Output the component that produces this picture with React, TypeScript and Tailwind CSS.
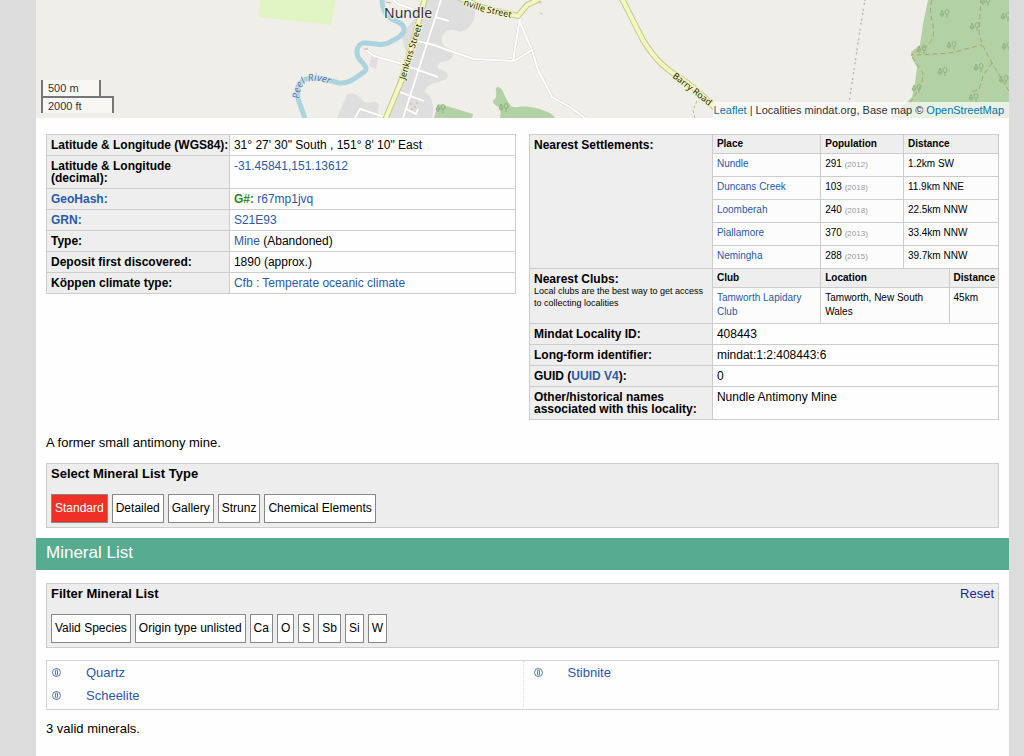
import React from 'react';

const settlements = [
  { place: 'Nundle', population: '291', year: '(2012)', distance: '1.2km SW' },
  { place: 'Duncans Creek', population: '103', year: '(2018)', distance: '11.9km NNE' },
  { place: 'Loomberah', population: '240', year: '(2018)', distance: '22.5km NNW' },
  { place: 'Piallamore', population: '370', year: '(2013)', distance: '33.4km NNW' },
  { place: 'Nemingha', population: '288', year: '(2015)', distance: '39.7km NNW' },
];

const listTypes = ['Standard', 'Detailed', 'Gallery', 'Strunz', 'Chemical Elements'];
const filters = ['Valid Species', 'Origin type unlisted', 'Ca', 'O', 'S', 'Sb', 'Si', 'W'];

const trees = [
  [945, 14], [975, 27], [952, 46], [943, 72], [979, 68], [922, 50], [917, 89],
  [986, 2], [1006, 17], [1007, 47], [1004, 80], [974, 98], [441, 109], [504, 108],
];

const link = 'text-[#2a5aa8] hover:underline';
const labelCell = 'border border-[#ccc] bg-[#eee] px-1 py-1 text-left align-top font-bold';
const valueCell = 'border border-[#ccc] px-1 py-1 align-top';

// cells of the tables nested in the right hand panel
const subHead = 'bg-[#eee] px-1 py-[2px] text-left font-bold border-b border-[#ccc] not-last:border-r';
const subCell = 'px-1 pt-[3px] align-top border-[#ccc] not-last:border-r';

const LocalityMap: React.FC = () => (
  <div className="relative h-[118px] overflow-hidden bg-[#f0eee9]">
    <svg className="block h-full w-full" viewBox="36 0 973 118" preserveAspectRatio="xMidYMid slice" fill="none" role="img" aria-label="Map of Nundle">
      <defs>
        <g id="tree" stroke="#8eb382" strokeWidth="1">
          <path d="M-3 3 V-1 M-5 1 L-3 -4 L-1 1 Z" />
          <path d="M2 4 V0" />
          <ellipse cx="2" cy="-2" rx="2" ry="2.5" />
        </g>
        <path id="peel" d="M300 99 C299 88 303 82 312 81 C320 80 328 83 340 88" />
        <path id="granville" d="M463 5 L484 12 L522 20" />
      </defs>

      {/* Land use */}
      <path d="M261 0 L258 17 L331 25 L336 0 Z" fill="#e0f4c4" />
      <path d="M423 0 L473 0 C476 8 476 17 472 23 C466 32 461 33 455 30 C446 28 440 36 442 42 C444 49 452 48 453 54 C453 63 439 60 437 66 C438 71 447 69 448 76 C446 84 428 80 425 91 C434 98 434 111 432 118 L385 118 L403 65 C410 57 405 49 402 39 C403 28 416 22 418 8 Z" fill="#dedede" />
      <path d="M337 118 L347 95 C352 91 360 96 363 101 C369 106 374 98 379 104 L377 118 Z" fill="#dedede" />
      <path d="M372 56 L378 58 L376 69 L369 66 Z" fill="#e6d9e6" />
      <path d="M434 118 L438 104 L450 107 L473 114 L472 118 Z" fill="#b2d1a4" />
      <path d="M500 118 L501 108 C493 105 491 101 495 99 C498 95 494 90 497 87 C503 86 503 95 509 103 C512 111 520 105 530 107 C542 109 553 113 555 118 Z" fill="#b2d1a4" />
      <path d="M928 0 L923 24 L920 45 L911 52 L913 60 L917 67 L915 83 L912 97 L900 110 L890 118 L1009 118 L1009 0 Z" fill="#b2d1a4" />

      {/* River */}
      <path d="M382 0 C382 6 384 13 390 18 C397 22 405 23 404 31 C402 37 394 40 388 43 C379 47 373 42 363 43 C357 45 356 51 358 57 C361 63 370 67 364 72 C354 79 348 84 339 83 L328 80 C315 77 303 76 298 86 C295 98 302 107 305 119" stroke="#aad3df" strokeWidth="5" />

      {/* Minor roads */}
      <g stroke="#d8d6d3" strokeWidth="3">
        <path d="M441 0 L403 118 M435 17 L449 21 M417 41 L434 45 L453 52 L474 59 L514 61 L532 50 M520 18 L513 61 M518 18 L532 50 L538 70 L552 97 L570 107 L585 118 M407 66 L438 77 M366 50 L374 56 L403 64 M397 91 L424 101 M406 109 L416 114 L418 109 M355 118 L360 109 L388 118 M393 0 L398 4 L418 11" />
      </g>
      <g stroke="#ffffff" strokeWidth="2">
        <path d="M441 0 L403 118 M435 17 L449 21 M417 41 L434 45 L453 52 L474 59 L514 61 L532 50 M520 18 L513 61 M518 18 L532 50 L538 70 L552 97 L570 107 L585 118 M407 66 L438 77 M366 50 L374 56 L403 64 M397 91 L424 101 M406 109 L416 114 L418 109 M355 118 L360 109 L388 118 M393 0 L398 4 L418 11" />
      </g>

      {/* Main roads */}
      <g stroke="#c3c79a" strokeWidth="6">
        <path d="M425 -2 L418 24 L403 77 L385 120" />
        <path d="M455 -4 L484 8 L518 16 L527 5 L540 -1" />
        <path d="M621 -3 C629 12 636 27 643 40 C656 62 669 71 682 79 C699 91 713 105 726 120" />
      </g>
      <g stroke="#f5f8ba" strokeWidth="4">
        <path d="M425 -2 L418 24 L403 77 L385 120" />
        <path d="M455 -4 L484 8 L518 16 L527 5 L540 -1" />
        <path d="M621 -3 C629 12 636 27 643 40 C656 62 669 71 682 79 C699 91 713 105 726 120" />
      </g>

      {/* Tracks and boundary */}
      <path d="M932 0 C927 13 936 25 933 36 C930 47 922 48 911 55 C945 54 955 53 965 49 L982 45 M981 -2 L979 33 L982 44 L992 63 L1009 91 M912 57 L923 73 L922 83 L913 99 L903 109 M992 63 L983 76 L979 90 L970 92" stroke="#b7a25c" strokeWidth="1" strokeDasharray="5 3" />
      <path d="M697 101 L693 110 L695 118 M540 13 L544 15 M535 -2 L542 4" stroke="#ccb583" strokeWidth="1" strokeDasharray="3 2" />
      <path d="M865 -1 L860 30 L854 70 L849 103" stroke="#c8a8c8" strokeWidth="1.4" strokeDasharray="2 2 2 4" />
      <path d="M386 2 L391 3 M364 49 L368 49 M410 104 H412 M414 107 H416 M411 109 H413 M416 103 H418" stroke="#d7a68c" strokeWidth="1" />
      {trees.map(([x, y]) => (
        <use key={`${x}-${y}`} href="#tree" x={x} y={y} />
      ))}

      {/* Place names */}
      <g fontFamily="'Noto Sans', sans-serif" paintOrder="stroke" strokeLinejoin="round">
        <text x="384" y="18" fontSize="14" fill="#333" stroke="#f2f0ec" strokeWidth="2">Nundle</text>
        <text fontSize="9" fill="#222" stroke="#f5f8ba" strokeWidth="2" transform="translate(405 80) rotate(-73)">Jenkins Street</text>
        <text fontSize="9" fill="#222" stroke="#f5f8ba" strokeWidth="2" transform="translate(672 77) rotate(38)">Barry Road</text>
        <text fontSize="9" fill="#222" stroke="#f5f8ba" strokeWidth="2">
          <textPath href="#granville">nville Street</textPath>
        </text>
        <text fontSize="10" fill="#4a74b8" stroke="#f0eee9" strokeWidth="1" fontStyle="italic">
          <textPath href="#peel">Peel River</textPath>
        </text>
      </g>
    </svg>

    {/* Scale */}
    <div className="absolute bottom-[5px] left-[5px] text-[11px] leading-4 text-[#333]">
      <div className="h-4 w-[60px] border-x-2 border-[#777] bg-white/50 px-[5px]">500 m</div>
      <div className="h-[17px] w-[73px] border-2 border-b-0 border-[#777] bg-white/50 px-[5px]">2000 ft</div>
    </div>

    <div className="absolute right-0 bottom-0 bg-white/70 pr-[5px] pl-px text-[11px] leading-4 text-[#333]">
      <a href="#leaflet" className="text-[#0078a8]">Leaflet</a> | Localities mindat.org, Base map © <a href="#osm" className="text-[#0078a8]">OpenStreetMap</a>
    </div>
  </div>
);

const InfoIcon: React.FC = () => (
  <svg className="h-[9px] w-[9px]" viewBox="0 0 9 9" fill="none" stroke="#2a5aa8" strokeWidth="0.8" aria-hidden="true">
    <circle cx="4.5" cy="4.5" r="4" />
    <rect x="3.5" y="2" width="2" height="5" rx="0.8" />
  </svg>
);

const Mineral: React.FC<{ name: string }> = ({ name }) => (
  <li className="flex h-[23px] items-center">
    <a href={`#info-${name}`} aria-label={`About ${name}`} className="w-[34px] shrink-0"><InfoIcon /></a>
    <a href={`#${name}`} className={link}>{name}</a>
  </li>
);

const OptionButton: React.FC<{ label: string; active?: boolean }> = ({ label, active }) => (
  <button
    type="button"
    className={`h-[29px] border border-[#888] px-[3px] pb-[2px] text-[12px] ${active ? 'bg-[#ee3124] text-white' : 'bg-white text-black'}`}
  >
    {label}
  </button>
);

const GeneralTable: React.FC = () => (
  <table className="w-full table-fixed border-collapse text-[12px] leading-3">
    <colgroup>
      <col className="w-[39%]" />
      <col />
    </colgroup>
    <tbody>
      <tr>
        <th scope="row" className={`${labelCell} whitespace-nowrap`}>Latitude &amp; Longitude (WGS84):</th>
        <td className={valueCell}>31° 27' 30" South , 151° 8' 10" East</td>
      </tr>
      <tr>
        <th scope="row" className={labelCell}>Latitude &amp; Longitude (decimal):</th>
        <td className={valueCell}><a href="#coords" className={link}>-31.45841,151.13612</a></td>
      </tr>
      <tr>
        <th scope="row" className={labelCell}><a href="#geohash" className={link}>GeoHash:</a></th>
        <td className={valueCell}><b className="text-[#2c8a1c]">G#:</b> <a href="#hash" className={link}>r67mp1jvq</a></td>
      </tr>
      <tr>
        <th scope="row" className={labelCell}><a href="#grn" className={link}>GRN:</a></th>
        <td className={valueCell}><a href="#grid" className={link}>S21E93</a></td>
      </tr>
      <tr>
        <th scope="row" className={labelCell}>Type:</th>
        <td className={valueCell}><a href="#mine" className={link}>Mine</a> (Abandoned)</td>
      </tr>
      <tr>
        <th scope="row" className={labelCell}>Deposit first discovered:</th>
        <td className={valueCell}>1890 (approx.)</td>
      </tr>
      <tr>
        <th scope="row" className={labelCell}>Köppen climate type:</th>
        <td className={valueCell}><a href="#climate" className={link}>Cfb : Temperate oceanic climate</a></td>
      </tr>
    </tbody>
  </table>
);

const LocalityTable: React.FC = () => (
  <table className="w-full table-fixed border-collapse text-[12px] leading-3">
    <colgroup>
      <col className="w-[39%]" />
      <col />
    </colgroup>
    <tbody>
      <tr>
        <th scope="row" className={labelCell}>Nearest Settlements:</th>
        <td className="border border-[#ccc] p-0 align-top">
          <table className="w-full table-fixed border-separate border-spacing-0 bg-[#fcfcfc] text-[10px] leading-[14px]">
            <colgroup>
              <col className="w-[38%]" />
              <col className="w-[29%]" />
              <col />
            </colgroup>
            <thead>
              <tr>
                <th className={subHead}>Place</th>
                <th className={subHead}>Population</th>
                <th className={subHead}>Distance</th>
              </tr>
            </thead>
            <tbody className="[&>tr:not(:last-child)>td]:border-b">
              {settlements.map(s => (
                <tr key={s.place}>
                  <td className={`${subCell} pb-[5px]`}><a href={`#${s.place}`} className={link}>{s.place}</a></td>
                  <td className={`${subCell} pb-[5px]`}>{s.population} <span className="text-[8px] leading-none text-[#999]">{s.year}</span></td>
                  <td className={`${subCell} pb-[5px]`}>{s.distance}</td>
                </tr>
              ))}
            </tbody>
          </table>
        </td>
      </tr>
      <tr>
        <th scope="row" className={labelCell}>
          Nearest Clubs:
          <p className="text-[9px] font-normal whitespace-nowrap">Local clubs are the best way to get access<br />to collecting localities</p>
        </th>
        <td className="border border-[#ccc] p-0 align-top">
          <table className="w-full table-fixed border-separate border-spacing-0 bg-[#fcfcfc] text-[10px] leading-[14px]">
            <colgroup>
              <col className="w-[38%]" />
              <col className="w-[45%]" />
              <col />
            </colgroup>
            <thead>
              <tr>
                <th className={subHead}>Club</th>
                <th className={subHead}>Location</th>
                <th className={subHead}>Distance</th>
              </tr>
            </thead>
            <tbody>
              <tr>
                <td className={`${subCell} pb-1`}><a href="#club" className={link}>Tamworth Lapidary Club</a></td>
                <td className={`${subCell} pb-1`}>Tamworth, New South Wales</td>
                <td className={`${subCell} pb-1`}>45km</td>
              </tr>
            </tbody>
          </table>
        </td>
      </tr>
      <tr>
        <th scope="row" className={labelCell}>Mindat Locality ID:</th>
        <td className={valueCell}>408443</td>
      </tr>
      <tr>
        <th scope="row" className={labelCell}>Long-form identifier:</th>
        <td className={valueCell}>mindat:1:2:408443:6</td>
      </tr>
      <tr>
        <th scope="row" className={labelCell}>GUID (<a href="#uuid" className={link}>UUID V4</a>):</th>
        <td className={valueCell}>0</td>
      </tr>
      <tr>
        <th scope="row" className={labelCell}>Other/historical names associated with this locality:</th>
        <td className={valueCell}>Nundle Antimony Mine</td>
      </tr>
    </tbody>
  </table>
);

export default function App() {
  return (
    <div className="min-h-screen bg-[#dcdcdc] pr-[15px] pl-9 font-['Liberation_Sans',Arial,sans-serif] text-[13px] text-black">
      <main className="min-h-screen bg-[#fefefe] pb-4">
        <LocalityMap />

        <div className="flex items-start gap-[13px] px-[10px] pt-4">
          <div className="min-w-0 flex-1"><GeneralTable /></div>
          <div className="min-w-0 flex-1"><LocalityTable /></div>
        </div>

        <p className="px-[10px] pt-[13px] leading-5">A former small antimony mine.</p>

        <section className="mx-[10px] mt-[10px] border border-[#ccc] bg-[#ededed] p-1">
          <h3 className="leading-3 font-bold">Select Mineral List Type</h3>
          <div className="mt-[14px] flex flex-wrap gap-1">
            {listTypes.map((t, i) => <OptionButton key={t} label={t} active={i === 0} />)}
          </div>
        </section>

        <h2 className="mt-[10px] bg-[#57ab90] px-[10px] pb-[2px] text-[17px] leading-[30px] text-white">Mineral List</h2>

        <section className="mx-[10px] mt-[13px] border border-[#ccc] bg-[#ededed] p-1">
          <div className="flex items-center justify-between leading-3">
            <h3 className="font-bold">Filter Mineral List</h3>
            <a href="#reset" className="text-[#0f2a8c]">Reset</a>
          </div>
          <div className="mt-[14px] flex flex-wrap gap-1">
            {filters.map(f => <OptionButton key={f} label={f} />)}
          </div>
        </section>

        <div className="mx-[10px] mt-3 grid grid-cols-2 border border-[#d4d4d4] pb-[2px]">
          <ul className="pl-[5px]">
            <Mineral name="Quartz" />
            <Mineral name="Scheelite" />
          </ul>
          <ul className="border-l border-dotted border-[#ddd] pl-[10px]">
            <Mineral name="Stibnite" />
          </ul>
        </div>

        <p className="px-[10px] pt-[9px] leading-5">3 valid minerals.</p>
      </main>
    </div>
  );
}
